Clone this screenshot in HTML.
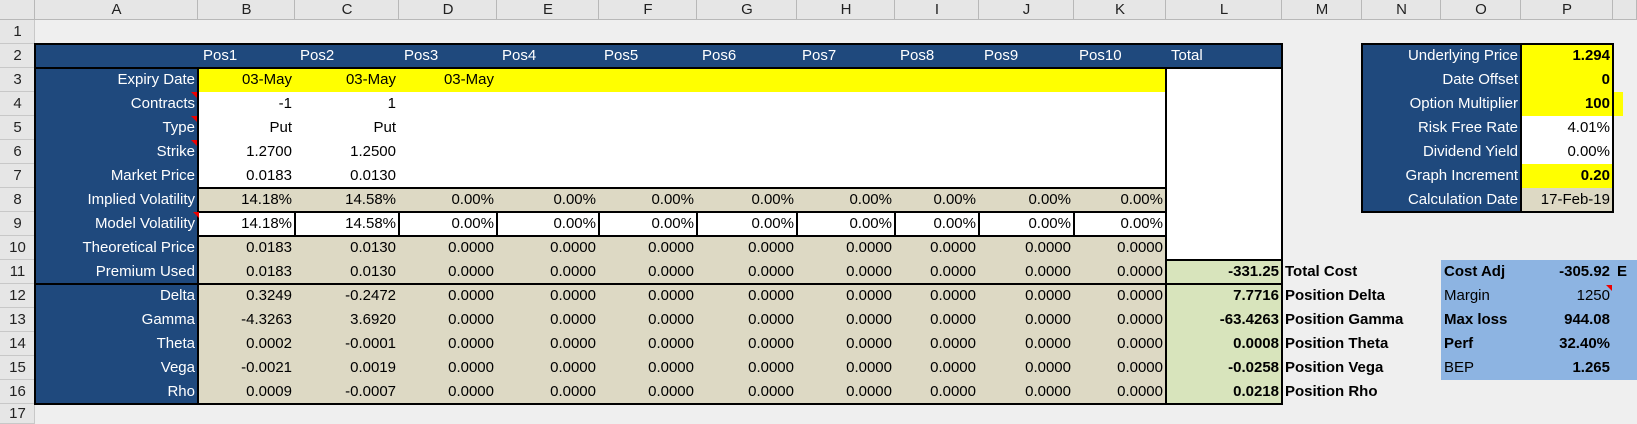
<!DOCTYPE html>
<html><head><meta charset="utf-8"><style>
*{margin:0;padding:0;box-sizing:border-box}
body{width:1637px;height:416px;overflow:hidden;background:#efefef;font-family:"Liberation Sans",Arial,sans-serif;font-size:15px;color:#000;position:relative}
table{border-collapse:collapse;border-spacing:0;table-layout:fixed;position:absolute;left:0;top:0;width:1637px}
td{height:24px;padding:0 3px;white-space:nowrap;overflow:hidden;line-height:24px;border:0}
tr.h td{height:20px;background:#e6e6e6;text-align:center;color:#222;font-size:15px;line-height:20px;box-shadow:inset -1px -1px 0 #b8b8b8}
td.rn{background:#e6e6e6;text-align:center;color:#222;font-size:15px;box-shadow:inset -1px -1px 0 #c8c8c8;padding:0}
.b{background:#1f497d;color:#fff;text-align:right}
.bl{background:#1f497d;color:#fff;text-align:left;padding-left:5px}
.y{background:#ffff00;text-align:right}
.w{background:#fff;text-align:right}
.t{background:#ddd9c4;text-align:right}
.g{background:#d8e4bc;text-align:right;font-weight:bold}
.lb{background:#8db4e2}
.r{text-align:right}
.bo{font-weight:bold}
.ov{overflow:visible}
.ln{position:absolute;background:#000}
.tri{position:absolute;width:0;height:0;border-left:6px solid transparent;border-top:6px solid #e00}
</style></head><body>
<table>
<colgroup><col style="width:35px"><col style="width:163px"><col style="width:97px"><col style="width:104px"><col style="width:98px"><col style="width:102px"><col style="width:98px"><col style="width:100px"><col style="width:98px"><col style="width:84px"><col style="width:95px"><col style="width:92px"><col style="width:116px"><col style="width:80px"><col style="width:79px"><col style="width:80px"><col style="width:92px"><col style="width:24px"></colgroup>
<tr class="h"><td></td><td>A</td><td>B</td><td>C</td><td>D</td><td>E</td><td>F</td><td>G</td><td>H</td><td>I</td><td>J</td><td>K</td><td>L</td><td>M</td><td>N</td><td>O</td><td>P</td><td></td></tr>
<tr><td class="rn">1</td><td colspan="17"></td></tr>
<tr><td class="rn">2</td><td class="b"></td><td class="bl">Pos1</td><td class="bl">Pos2</td><td class="bl">Pos3</td><td class="bl">Pos4</td><td class="bl">Pos5</td><td class="bl">Pos6</td><td class="bl">Pos7</td><td class="bl">Pos8</td><td class="bl">Pos9</td><td class="bl">Pos10</td><td class="bl">Total</td><td></td><td class="b" colspan="2">Underlying Price</td><td class="y bo">1.294</td><td></td></tr>
<tr><td class="rn">3</td><td class="b">Expiry Date</td><td class="y">03-May</td><td class="y">03-May</td><td class="y">03-May</td><td class="y"></td><td class="y"></td><td class="y"></td><td class="y"></td><td class="y"></td><td class="y"></td><td class="y"></td><td class="w"></td><td></td><td class="b" colspan="2">Date Offset</td><td class="y bo">0</td><td></td></tr>
<tr><td class="rn">4</td><td class="b">Contracts</td><td class="w">-1</td><td class="w">1</td><td class="w"></td><td class="w"></td><td class="w"></td><td class="w"></td><td class="w"></td><td class="w"></td><td class="w"></td><td class="w"></td><td class="w"></td><td></td><td class="b" colspan="2">Option Multiplier</td><td class="y bo">100</td><td style="padding:0"><div style="background:#ff0;width:10px;height:24px"></div></td></tr>
<tr><td class="rn">5</td><td class="b">Type</td><td class="w">Put</td><td class="w">Put</td><td class="w"></td><td class="w"></td><td class="w"></td><td class="w"></td><td class="w"></td><td class="w"></td><td class="w"></td><td class="w"></td><td class="w"></td><td></td><td class="b" colspan="2">Risk Free Rate</td><td class="w">4.01%</td><td></td></tr>
<tr><td class="rn">6</td><td class="b">Strike</td><td class="w">1.2700</td><td class="w">1.2500</td><td class="w"></td><td class="w"></td><td class="w"></td><td class="w"></td><td class="w"></td><td class="w"></td><td class="w"></td><td class="w"></td><td class="w"></td><td></td><td class="b" colspan="2">Dividend Yield</td><td class="w">0.00%</td><td></td></tr>
<tr><td class="rn">7</td><td class="b">Market Price</td><td class="w">0.0183</td><td class="w">0.0130</td><td class="w"></td><td class="w"></td><td class="w"></td><td class="w"></td><td class="w"></td><td class="w"></td><td class="w"></td><td class="w"></td><td class="w"></td><td></td><td class="b" colspan="2">Graph Increment</td><td class="y bo">0.20</td><td></td></tr>
<tr><td class="rn">8</td><td class="b">Implied Volatility</td><td class="t">14.18%</td><td class="t">14.58%</td><td class="t">0.00%</td><td class="t">0.00%</td><td class="t">0.00%</td><td class="t">0.00%</td><td class="t">0.00%</td><td class="t">0.00%</td><td class="t">0.00%</td><td class="t">0.00%</td><td class="w"></td><td></td><td class="b" colspan="2">Calculation Date</td><td class="t">17-Feb-19</td><td></td></tr>
<tr><td class="rn">9</td><td class="b">Model Volatility</td><td class="w">14.18%</td><td class="w">14.58%</td><td class="w">0.00%</td><td class="w">0.00%</td><td class="w">0.00%</td><td class="w">0.00%</td><td class="w">0.00%</td><td class="w">0.00%</td><td class="w">0.00%</td><td class="w">0.00%</td><td class="w"></td><td colspan="5"></td></tr>
<tr><td class="rn">10</td><td class="b">Theoretical Price</td><td class="t">0.0183</td><td class="t">0.0130</td><td class="t">0.0000</td><td class="t">0.0000</td><td class="t">0.0000</td><td class="t">0.0000</td><td class="t">0.0000</td><td class="t">0.0000</td><td class="t">0.0000</td><td class="t">0.0000</td><td class="w"></td><td colspan="5"></td></tr>
<tr><td class="rn">11</td><td class="b">Premium Used</td><td class="t">0.0183</td><td class="t">0.0130</td><td class="t">0.0000</td><td class="t">0.0000</td><td class="t">0.0000</td><td class="t">0.0000</td><td class="t">0.0000</td><td class="t">0.0000</td><td class="t">0.0000</td><td class="t">0.0000</td><td class="g">-331.25</td><td class="bo ov">Total Cost</td><td></td><td class="lb bo">Cost Adj</td><td class="lb bo r">-305.92</td><td class="lb bo" style="padding-left:4px">E</td></tr>
<tr><td class="rn">12</td><td class="b">Delta</td><td class="t">0.3249</td><td class="t">-0.2472</td><td class="t">0.0000</td><td class="t">0.0000</td><td class="t">0.0000</td><td class="t">0.0000</td><td class="t">0.0000</td><td class="t">0.0000</td><td class="t">0.0000</td><td class="t">0.0000</td><td class="g">7.7716</td><td class="bo ov">Position Delta</td><td></td><td class="lb">Margin</td><td class="lb r">1250</td><td class="lb"></td></tr>
<tr><td class="rn">13</td><td class="b">Gamma</td><td class="t">-4.3263</td><td class="t">3.6920</td><td class="t">0.0000</td><td class="t">0.0000</td><td class="t">0.0000</td><td class="t">0.0000</td><td class="t">0.0000</td><td class="t">0.0000</td><td class="t">0.0000</td><td class="t">0.0000</td><td class="g">-63.4263</td><td class="bo ov">Position Gamma</td><td></td><td class="lb bo">Max loss</td><td class="lb bo r">944.08</td><td class="lb"></td></tr>
<tr><td class="rn">14</td><td class="b">Theta</td><td class="t">0.0002</td><td class="t">-0.0001</td><td class="t">0.0000</td><td class="t">0.0000</td><td class="t">0.0000</td><td class="t">0.0000</td><td class="t">0.0000</td><td class="t">0.0000</td><td class="t">0.0000</td><td class="t">0.0000</td><td class="g">0.0008</td><td class="bo ov">Position Theta</td><td></td><td class="lb bo">Perf</td><td class="lb bo r">32.40%</td><td class="lb"></td></tr>
<tr><td class="rn">15</td><td class="b">Vega</td><td class="t">-0.0021</td><td class="t">0.0019</td><td class="t">0.0000</td><td class="t">0.0000</td><td class="t">0.0000</td><td class="t">0.0000</td><td class="t">0.0000</td><td class="t">0.0000</td><td class="t">0.0000</td><td class="t">0.0000</td><td class="g">-0.0258</td><td class="bo ov">Position Vega</td><td></td><td class="lb">BEP</td><td class="lb bo r">1.265</td><td class="lb"></td></tr>
<tr><td class="rn">16</td><td class="b">Rho</td><td class="t">0.0009</td><td class="t">-0.0007</td><td class="t">0.0000</td><td class="t">0.0000</td><td class="t">0.0000</td><td class="t">0.0000</td><td class="t">0.0000</td><td class="t">0.0000</td><td class="t">0.0000</td><td class="t">0.0000</td><td class="g">0.0218</td><td class="bo ov">Position Rho</td><td colspan="4"></td></tr>
<tr><td class="rn" style="height:12px;line-height:20px;vertical-align:top">17</td><td colspan="17" style="height:12px"></td></tr>
</table>
<!-- borders -->
<div class="ln" style="left:35px;top:43px;width:1248px;height:2px"></div>
<div class="ln" style="left:35px;top:67px;width:1248px;height:2px"></div>
<div class="ln" style="left:34px;top:43px;width:2px;height:362px"></div>
<div class="ln" style="left:197px;top:67px;width:2px;height:338px"></div>
<div class="ln" style="left:1165px;top:67px;width:2px;height:338px"></div>
<div class="ln" style="left:1281px;top:43px;width:2px;height:362px"></div>
<div class="ln" style="left:35px;top:403px;width:1248px;height:2px"></div>
<div class="ln" style="left:198px;top:187px;width:968px;height:2px"></div>
<div class="ln" style="left:198px;top:211px;width:968px;height:2px"></div>
<div class="ln" style="left:198px;top:235px;width:968px;height:2px"></div>
<div class="ln" style="left:1166px;top:259px;width:116px;height:2px"></div>
<div class="ln" style="left:35px;top:283px;width:1248px;height:2px"></div>
<div class="ln" style="left:294px;top:212px;width:2px;height:24px"></div>
<div class="ln" style="left:398px;top:212px;width:2px;height:24px"></div>
<div class="ln" style="left:496px;top:212px;width:2px;height:24px"></div>
<div class="ln" style="left:598px;top:212px;width:2px;height:24px"></div>
<div class="ln" style="left:696px;top:212px;width:2px;height:24px"></div>
<div class="ln" style="left:796px;top:212px;width:2px;height:24px"></div>
<div class="ln" style="left:894px;top:212px;width:2px;height:24px"></div>
<div class="ln" style="left:978px;top:212px;width:2px;height:24px"></div>
<div class="ln" style="left:1073px;top:212px;width:2px;height:24px"></div>
<!-- right table -->
<div class="ln" style="left:1361px;top:43px;width:253px;height:2px"></div>
<div class="ln" style="left:1361px;top:211px;width:253px;height:2px"></div>
<div class="ln" style="left:1361px;top:43px;width:2px;height:170px"></div>
<div class="ln" style="left:1520px;top:43px;width:2px;height:170px"></div>
<div class="ln" style="left:1612px;top:43px;width:2px;height:170px"></div>
<!-- comment markers -->
<div class="tri" style="left:191px;top:92px"></div>
<div class="tri" style="left:191px;top:116px"></div>
<div class="tri" style="left:191px;top:140px"></div>
<div class="tri" style="left:193px;top:212px"></div>
<div class="tri" style="left:1606px;top:285px"></div>
</body></html>
